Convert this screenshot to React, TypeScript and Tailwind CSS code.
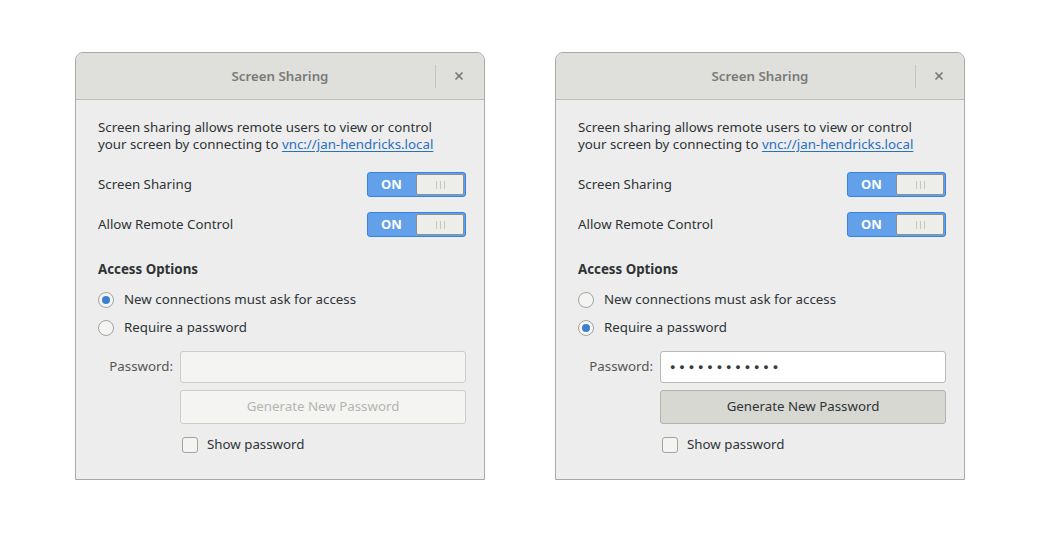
import { X } from 'lucide-react';

const font = { fontFamily: '"Noto Sans", "Open Sans", sans-serif' };

const Switch = () => (
  <div className="flex h-[25px] w-[99px] rounded-[3px] border border-[#3584e4] bg-[#62a0ea] p-[1px]">
    <div className="flex flex-1 items-center justify-center pr-[2px] text-[13px] font-bold text-white">ON</div>
    <div className="flex w-[48px] items-center justify-center gap-[3px] rounded-[2px] border border-[#8f8f8c] bg-[#edede9]">
      <span className="h-[8px] w-px bg-[#c6c6c2]" />
      <span className="h-[8px] w-px bg-[#c6c6c2]" />
      <span className="h-[8px] w-px bg-[#c6c6c2]" />
    </div>
  </div>
);

const Radio = ({ checked, label }: { checked: boolean; label: string }) => (
  <div className="flex h-[20px] items-center gap-[10px]">
    <div className="flex h-[16px] w-[16px] items-center justify-center rounded-full border border-[#a3a3a0] bg-[#f4f4f2]">
      {checked && <div className="h-[8px] w-[8px] rounded-full bg-[#3d7fcf]" />}
    </div>
    <span>{label}</span>
  </div>
);

const Dialog = ({ passwordMode }: { passwordMode: boolean }) => (
  <div className="flex h-[428px] w-[410px] flex-col overflow-hidden rounded-t-[8px] border border-[#a8a8a6] bg-[#ededed] text-[13.3px] text-[#2e3436]" style={font}>
    {/* header */}
    <div className="grid h-[47px] shrink-0 grid-cols-[1fr_auto_1fr] items-center border-b border-[#bdbdba] bg-[#dfdfdc]">
      <div />
      <div className="pt-[2px] font-semibold text-[#7a7a78]">Screen Sharing</div>
      <div className="flex items-center justify-end">
        <div className="h-[23px] w-px bg-[#c3c3c0]" />
        <div className="flex w-[48px] justify-center pr-[2px] text-[#787876]">
          <X className="h-[12px] w-[12px]" strokeWidth={3.5} />
        </div>
      </div>
    </div>

    {/* body */}
    <div className="flex flex-col pl-[22px] pr-[18px] pt-[19px]">
      <p className="leading-[17px]">
        Screen sharing allows remote users to view or control
        <br />
        your screen by connecting to{' '}
        <span className="text-[#2a6fc0] underline underline-offset-2">vnc://jan-hendricks.local </span>
      </p>

      <div className="mt-[19px] flex items-center justify-between">
        <span>Screen Sharing</span>
        <Switch />
      </div>
      <div className="mt-[15px] flex items-center justify-between">
        <span>Allow Remote Control</span>
        <Switch />
      </div>

      <div className="mt-[24px] font-bold leading-[17px]">Access Options</div>

      <div className="mt-[12px] flex flex-col gap-[8px]">
        <Radio checked={!passwordMode} label="New connections must ask for access" />
        <Radio checked={passwordMode} label="Require a password" />
      </div>

      <div className="mt-[13px] grid grid-cols-[75px_1fr] gap-x-[7px] gap-y-[7px]">
        <div className="flex items-center justify-end text-[#555753]">Password:</div>
        {passwordMode ? (
          <div className="flex h-[32px] items-center rounded-[3px] border border-[#b8b8b4] bg-white pl-[9px] text-[9px] tracking-[3.9px] text-[#3a3c3a]">
            ●●●●●●●●●●●●
          </div>
        ) : (
          <div className="h-[32px] rounded-[3px] border border-[#cdcdc9] bg-[#f4f4f2]" />
        )}
        <div />
        {passwordMode ? (
          <div className="flex h-[34px] items-center justify-center rounded-[3px] border border-[#b3b3ae] bg-[#d8d8d3]">
            Generate New Password
          </div>
        ) : (
          <div className="flex h-[34px] items-center justify-center rounded-[3px] border border-[#cdcdc9] bg-[#f4f4f2] text-[#b4b4b1]">
            Generate New Password
          </div>
        )}
        <div />
        <div className="mt-[4px] flex items-center gap-[9px] pl-[2px]">
          <div className="h-[16px] w-[16px] rounded-[3px] border border-[#a3a3a0] bg-[#f4f4f2]" />
          <span>Show password</span>
        </div>
      </div>
    </div>
  </div>
);

export default function App() {
  return (
    <div className="flex h-[540px] w-[1040px] gap-[70px] bg-white pl-[75px] pt-[52px]">
      <Dialog passwordMode={false} />
      <Dialog passwordMode={true} />
    </div>
  );
}
